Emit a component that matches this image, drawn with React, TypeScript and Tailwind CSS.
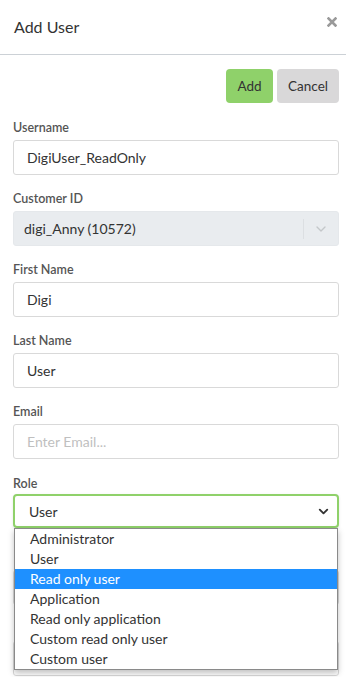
import { ChevronDown } from 'lucide-react';

const roles = [
  'Administrator',
  'User',
  'Read only user',
  'Application',
  'Read only application',
  'Custom read only user',
  'Custom user'
];

const font = { fontFamily: 'Lato, "Open Sans", sans-serif' };

function Label({ children }: { children: string }) {
  return <div className="mb-[4px] h-[16px] text-[12.5px] font-semibold leading-[16px] text-[#555]">{children}</div>;
}

function TextInput({ value, placeholder }: { value?: string; placeholder?: string }) {
  return (
    <div className="flex h-[35px] items-center rounded-[3px] border border-[#d9d9d9] bg-white px-[13px] text-[14px]">
      {value ? <span className="text-[#333]">{value}</span> : <span className="text-[#bfbfbf]">{placeholder}</span>}
    </div>
  );
}

export default function App() {
  return (
    <div className="min-h-screen overflow-hidden bg-white" style={font}>
      <header className="flex h-[55px] items-start justify-between border-b border-[#ccd1d6] pl-[14px] pr-[9px]">
        <h1 className="mt-[15px] text-[16px] leading-[24px] text-[#333]">Add User</h1>
        <svg className="mt-[17px]" width="10" height="10" viewBox="0 0 10 10" aria-hidden="true">
          <path d="M1.5 1.5 L8.5 8.5 M8.5 1.5 L1.5 8.5" stroke="#9a9a9a" strokeWidth="2.6" strokeLinecap="square" />
        </svg>
      </header>

      <div className="pl-[13px] pr-[7px]">
        <div className="mt-[14px] flex justify-end gap-[4px]">
          <button className="h-[34px] w-[47px] rounded-[4px] bg-[#8fd16a] text-[13.5px] text-[#333]">Add</button>
          <button className="h-[34px] w-[62px] rounded-[4px] bg-[#d9d8d9] text-[13.5px] text-[#333]">Cancel</button>
        </div>

        <div className="mt-[17px] flex flex-col gap-[16px]">
          <div>
            <Label>Username</Label>
            <TextInput value="DigiUser_ReadOnly" />
          </div>

          <div>
            <Label>Customer ID</Label>
            <div className="flex h-[35px] items-center rounded-[3px] border border-[#e5e8eb] bg-[#e9ecef] text-[14px]">
              <span className="flex-1 pl-[10px] text-[#333]">digi_Anny (10572)</span>
              <span className="h-[20px] w-px bg-[#dcdfe2]" />
              <span className="flex w-[34px] justify-center text-[#c4c7ca]">
                <ChevronDown size={16} strokeWidth={2} />
              </span>
            </div>
          </div>

          <div>
            <Label>First Name</Label>
            <TextInput value="Digi" />
          </div>

          <div>
            <Label>Last Name</Label>
            <TextInput value="User" />
          </div>

          <div>
            <Label>Email</Label>
            <TextInput placeholder="Enter Email..." />
          </div>

          <div className="relative pt-[1px]">
            <div className="mb-[2px] h-[16px] text-[12.5px] font-semibold leading-[16px] text-[#555]">Role</div>
            <div className="flex h-[34px] items-center justify-between rounded-[4px] border-2 border-[#8fd16a] bg-white pl-[14px] pr-[6px] text-[14px] text-[#333] shadow-[0_1px_3px_rgba(0,0,0,0.1)]">
              <span>User</span>
              <ChevronDown size={15} strokeWidth={3} className="text-[#333]" />
            </div>

            <ul className="absolute left-[1px] right-[1px] top-[53px] z-10 border border-[#8a8a8a] bg-white text-[14px] leading-[20px] text-[#333] shadow-[0_3px_6px_rgba(0,0,0,0.25)]">
              {roles.map((role) => (
                <li
                  key={role}
                  className={role === 'Read only user' ? 'h-[20px] bg-[#1e90ff] pl-[15px] text-white' : 'h-[20px] pl-[15px]'}
                >
                  {role}
                </li>
              ))}
            </ul>
          </div>

          <div>
            <div className="mb-[4px] h-[16px]">
              <span className="ml-[1px] mt-[6px] block h-[4px] w-[3px] bg-[#bbb]" />
            </div>
            <div className="h-[35px] rounded-[3px] border border-[#d9d9d9]" />
          </div>

          <div>
            <div className="mb-[4px] h-[16px]" />
            <div className="h-[35px] rounded-[3px] border border-[#d9d9d9]" />
          </div>
        </div>
      </div>
    </div>
  );
}
